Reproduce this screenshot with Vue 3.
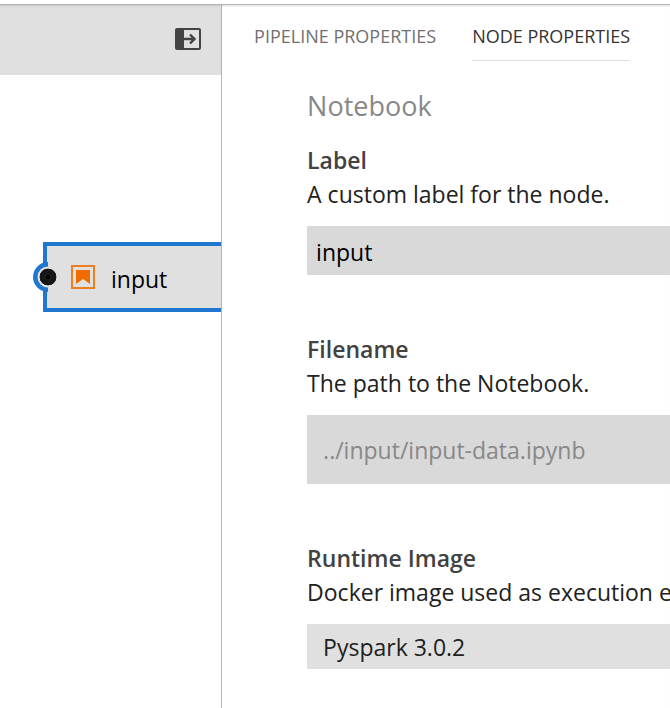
<script setup>
import { ref } from 'vue'

const activeTab = ref('node')
const label = ref('input')
const filename = ref('../input/input-data.ipynb')
const runtime = ref('Pyspark 3.0.2')
</script>

<template>
  <div class="editor">
    <section class="canvas-pane">
      <header class="toolbar">
        <button class="panel-toggle" type="button" aria-label="Close properties panel">
          <svg width="26" height="22" viewBox="0 0 26 22">
            <rect x="1" y="1" width="24" height="20" rx="1" fill="none" stroke="#444" stroke-width="2" />
            <rect x="1" y="1" width="8" height="20" fill="#444" />
            <path d="M9 11H19.5M15 6.5L19.5 11L15 15.5" fill="none" stroke="#444" stroke-width="2.4" />
          </svg>
        </button>
      </header>
      <div class="canvas">
        <div class="node">
          <svg class="port" width="32" height="30" viewBox="0 0 32 30">
            <path d="M15 0A15 15 0 0 0 15 30Z" fill="#1f77d0" />
            <circle cx="15" cy="15" r="10.5" fill="#e0e0e0" />
            <circle cx="15" cy="15" r="9" fill="#161616" stroke="#eee" stroke-width="1" />
            <circle cx="15" cy="15" r="3" fill="#000" stroke="#242424" stroke-width="1" />
          </svg>
          <svg class="node-icon" width="24" height="24" viewBox="0 0 24 24">
            <rect x="1" y="1" width="22" height="22" fill="none" stroke="#ef7d22" stroke-width="2" />
            <path d="M5 5H19V19L12 14L5 19Z" fill="#ef6c00" />
          </svg>
          <span class="node-label">input</span>
        </div>
      </div>
    </section>

    <aside class="panel">
      <nav class="tabs">
        <button class="tab" :class="{ active: activeTab === 'pipeline' }" type="button" @click="activeTab = 'pipeline'">PIPELINE PROPERTIES</button>
        <button class="tab" :class="{ active: activeTab === 'node' }" type="button" @click="activeTab = 'node'">NODE PROPERTIES</button>
      </nav>
      <form class="form" @submit.prevent>
        <h2 class="title">Notebook</h2>
        <div class="field">
          <label class="name" for="label">Label</label>
          <p class="help">A custom label for the node.</p>
          <input id="label" v-model="label" class="control" type="text" />
        </div>
        <div class="field">
          <label class="name" for="filename">Filename</label>
          <p class="help">The path to the Notebook.</p>
          <input id="filename" v-model="filename" class="control file" type="text" readonly />
        </div>
        <div class="field">
          <label class="name" for="runtime">Runtime Image</label>
          <p class="help">Docker image used as execution environment.</p>
          <select id="runtime" v-model="runtime" class="control runtime">
            <option>Pyspark 3.0.2</option>
          </select>
        </div>
      </form>
    </aside>
  </div>
</template>

<style>
body {
  margin: 0;
  background: #fff;
}
</style>

<style scoped>
.editor {
  box-sizing: border-box;
  display: grid;
  grid-template-columns: 33% minmax(0, 1fr);
  min-height: 100vh;
  padding-top: 4px;
  overflow: hidden;
  font-family: "Segoe UI", "Open Sans", "Noto Sans", sans-serif;
  font-weight: 400;
  color: #212121;
}
.canvas-pane,
.panel {
  border-top: 1px solid #b5b5b5;
  min-width: 0;
}
.toolbar {
  box-sizing: border-box;
  display: flex;
  justify-content: flex-end;
  align-items: center;
  height: 70px;
  padding: 0 20px 2px 0;
  background: #e0e0e0;
  box-shadow: inset 0 2px 2px -1px #c8c8c8;
}
.panel-toggle {
  display: flex;
  padding: 0;
  border: 0;
  background: none;
}
.canvas {
  padding: 167px 0 0 43px;
}
.node {
  position: relative;
  box-sizing: border-box;
  display: flex;
  align-items: center;
  gap: 16px;
  height: 70px;
  padding-left: 24px;
  border: 4px solid #1f77d0;
  border-right: 0;
  background: #e0e0e0;
}
.port {
  position: absolute;
  left: -14px;
  top: 16px;
}
.node-label {
  padding-top: 4px;
  font-size: 23px;
  line-height: 32px;
  color: #000;
}
.panel {
  overflow: hidden;
  border-left: 1px solid #b5b5b5;
  box-shadow: inset 0 2px 2px -1px #ddd;
}
.tabs {
  display: flex;
  gap: 36px;
  padding: 16px 0 0 32px;
}
.tab {
  padding: 0 0 8px;
  border: 0;
  border-bottom: 1px solid transparent;
  background: none;
  font-family: inherit;
  font-size: 18px;
  font-weight: inherit;
  line-height: 31px;
  white-space: nowrap;
  color: #707070;
}
.tab.active {
  border-bottom-color: #e0e0e0;
  color: #333;
}
.form {
  padding: 27px 0 0 85px;
}
.title {
  margin: 0 0 19px;
  font-size: 27px;
  font-weight: inherit;
  line-height: 36px;
  color: #888;
}
.field {
  margin-bottom: 57px;
}
.name {
  display: block;
  font-size: 23px;
  font-weight: 600;
  line-height: 34px;
  color: #424242;
}
.help {
  margin: 0 0 15px;
  font-size: 23px;
  line-height: 34px;
  white-space: nowrap;
}
.control {
  box-sizing: border-box;
  display: block;
  width: 100%;
  height: 49px;
  padding: 2px 9px 0;
  border: 0;
  border-radius: 0;
  outline: 0;
  background: #d9d9d9;
  font-family: inherit;
  font-size: 23px;
  font-weight: inherit;
  color: #000;
}
.file {
  height: 69px;
  padding: 0 16px;
  color: #888;
}
.runtime {
  height: 45px;
  padding: 0 16px;
  appearance: none;
  background: #e0e0e0;
  color: #212121;
}
</style>
